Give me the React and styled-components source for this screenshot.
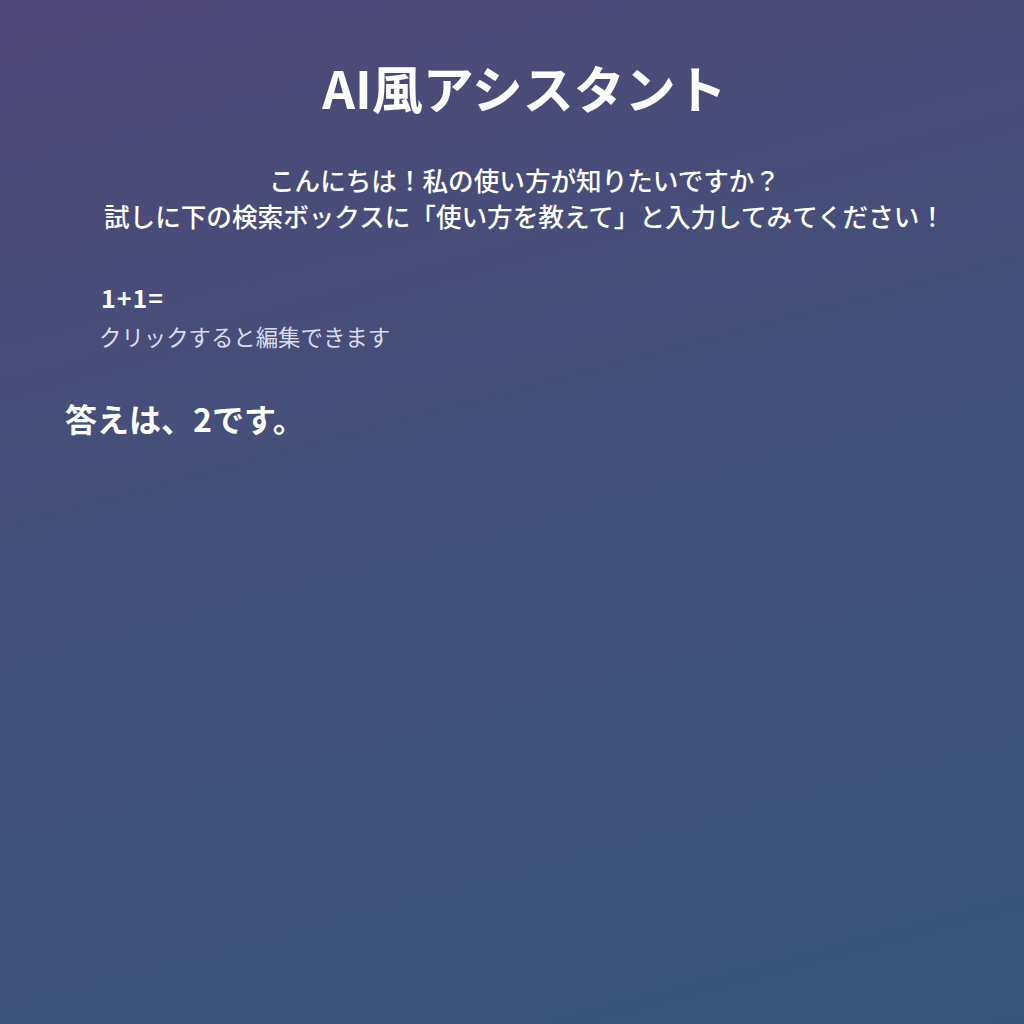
import styled, { createGlobalStyle } from "styled-components";

const GlobalStyle = createGlobalStyle`
  html, body {
    margin: 0;
    padding: 0;
  }
  body {
    font-family: "Noto Sans CJK JP", "Noto Sans", sans-serif;
    color: #ffffff;
  }
`;

export default function App() {
  return (
    <Page>
      <GlobalStyle />
      <Title>AI風アシスタント</Title>
      <Intro>
        こんにちは！私の使い方が知りたいですか？
        <br />
        試しに下の検索ボックスに「使い方を教えて」と入力してみてください！
      </Intro>
      <Question>
        <Formula>1+1=</Formula>
        <Hint>クリックすると編集できます</Hint>
      </Question>
      <Answer>答えは、2です。</Answer>
    </Page>
  );
}

const Page = styled.div`
  min-height: 100vh;
  box-sizing: border-box;
  padding: 52px 40px 40px 65px;
  background: linear-gradient(165deg, #4f4777 0%, #435079 45%, #37557a 100%);
`;

const Title = styled.h1`
  margin: 0;
  text-align: center;
  font-size: 51px;
  font-weight: 700;
  line-height: 1.4;
`;

const Intro = styled.p`
  margin: 39px 0 0;
  text-align: center;
  font-size: 25.6px;
  font-weight: 500;
  line-height: 36px;
`;

const Question = styled.div`
  margin: 44px 0 0 34px;
  display: flex;
  flex-direction: column;
`;

const Formula = styled.div`
  padding-left: 2px;
  font-size: 25px;
  font-weight: 600;
  letter-spacing: 1px;
  line-height: 38px;
`;

const Hint = styled.div`
  font-size: 22.4px;
  font-weight: 400;
  color: #dcdcec;
  line-height: 40px;
`;

const Answer = styled.div`
  margin-top: 42px;
  font-size: 32px;
  font-weight: 700;
  line-height: 1.3;
`;
